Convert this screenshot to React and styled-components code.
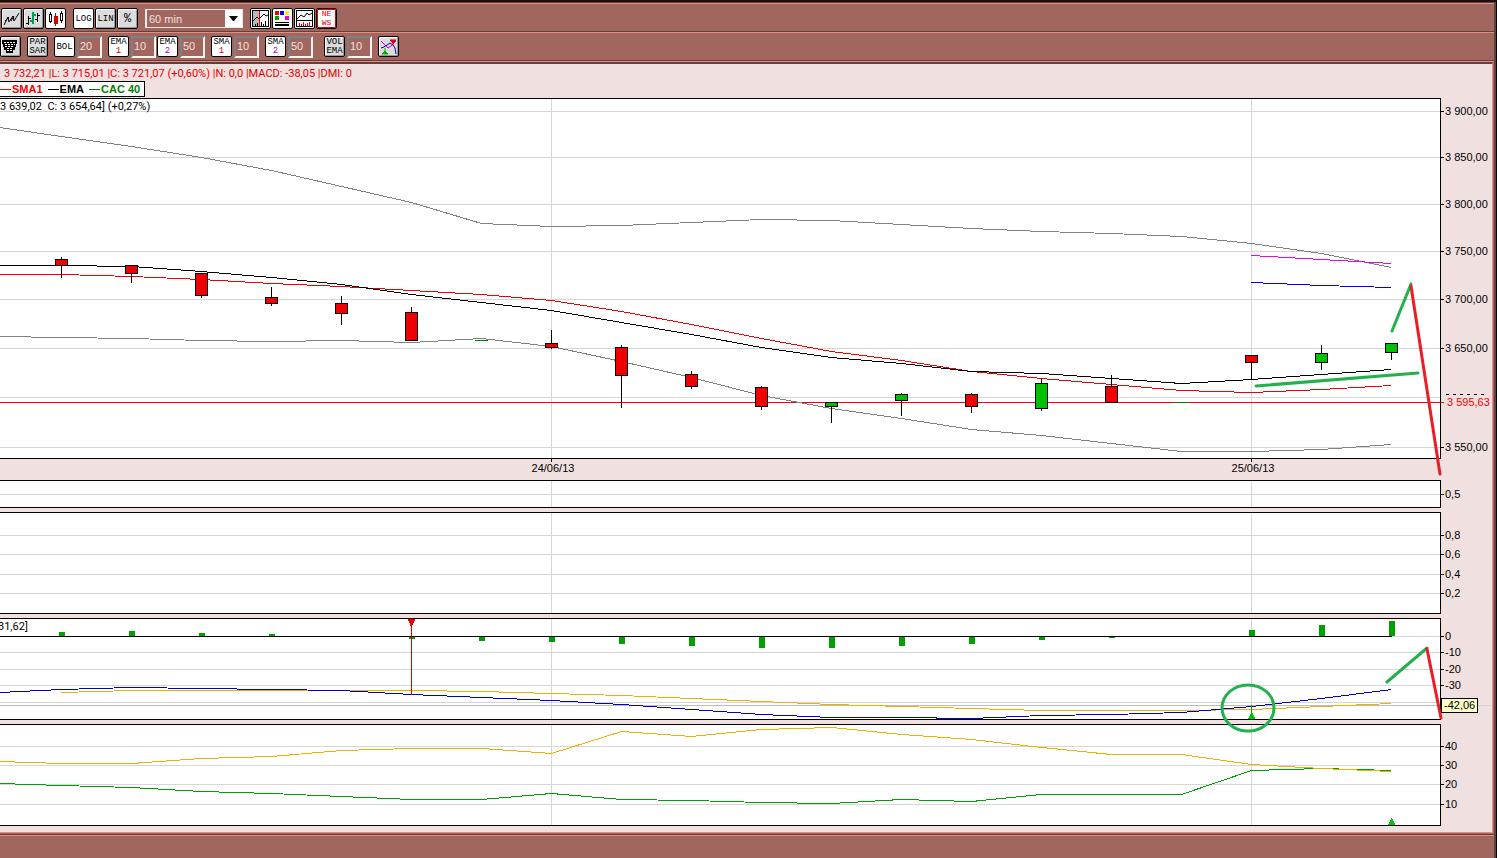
import React from "react"
import styled, {createGlobalStyle} from "styled-components"

const GlobalStyle = createGlobalStyle`
  * {
    box-sizing: border-box;
  }

  body {
    margin: 0;
    font-family: "Liberation Sans", Arial, sans-serif;
    font-size: 11px;
    line-height: 14px;
    background: #a1665e;
  }
`

const fill = "#a1665e"
const light = "#e38e84"
const dark = "#663f3a"
const pink = "#f0e0e0"
const grid = "#d6d6d6"

//  styled components
const Page = styled.div`
  display: flex;
  flex-direction: column;
  min-height: 100vh;
  background: ${fill};
  border-top: 2px solid #1a0d0b;
  border-right: 1px solid black;
  overflow: hidden;
`

const Frame = styled.div`
  border-right: 2px solid ${dark};
  border-top: 1px solid ${dark};
  flex: 1;
`

const Toolbar = styled.div`
  display: flex;
  align-items: center;
  gap: ${({$gap}) => $gap}px;
  height: 29px;
  padding-top: ${({$top}) => $top || 0}px;
  padding-left: ${({$left}) => $left || 0}px;
  border-top: 1px solid ${light};
  border-bottom: 1px solid ${dark};
`

const Divider = styled.div`
  height: 1px;
  background: ${light};
`

const Group = styled.div`
  display: flex;
  align-items: center;
  gap: ${({$gap}) => $gap || 1}px;
  margin-left: ${({$space}) => $space || 0}px;
`

const Button = styled.button`
  display: flex;
  flex-direction: column;
  align-items: center;
  justify-content: center;
  flex: none;
  width: 21px;
  height: 21px;
  padding: 1px 0 0;
  border: 1px solid black;
  border-radius: 2px;
  overflow: hidden;
  background: ${({$on}) => ($on ? "white" : "#dcdcdc")};
  box-shadow: ${({$on}) =>
    $on ? "none" : "inset 1px 1px white, inset -1px -1px #9a9a9a"};
  color: black;
  font-family: "Liberation Mono", monospace;
  font-size: ${({$big}) => ($big ? 12 : 9)}px;
  line-height: 9px;

  svg {
    display: block;
    flex: none;
    width: 19px;
    height: 19px;
    margin-top: -1px;
  }
`

const Index = styled.span`
  color: ${({$color}) => $color};
`

const News = styled.span`
  display: grid;
  width: 19px;
  height: 19px;
  margin-top: -1px;
  border: 1px solid #e00000;
  color: #e00000;
  font-size: 8px;
  line-height: 8px;
  text-align: center;
`

const Period = styled.input`
  width: 25px;
  height: 22px;
  padding: 0 0 2px 1px;
  border: 2px solid;
  border-color: #808080 #f4f4f4 #f4f4f4 #808080;
  border-radius: 0;
  background: ${fill};
  color: #f0e0e0;
  font: 11px "Liberation Sans", Arial, sans-serif;
`

const SelectBox = styled.div`
  position: relative;
  width: 98px;
  height: 19px;
`

const Select = styled.select`
  appearance: none;
  width: 100%;
  height: 100%;
  padding: 0 20px 0 2px;
  border: 1px solid #e8e8e8;
  border-width: 1px 2px;
  border-radius: 0;
  background: ${fill};
  color: #f0e0e0;
  font: 11px "Liberation Sans", Arial, sans-serif;
`

const Arrow = styled.span`
  position: absolute;
  top: 1px;
  right: 1px;
  bottom: 1px;
  width: 17px;
  display: flex;
  align-items: center;
  justify-content: center;
  background: white;
  pointer-events: none;
`

const Content = styled.main`
  margin-right: 1px;
  padding-bottom: 6px;
  background: ${pink};
  border-top: 2px solid ${dark};
  border-right: 1px solid ${light};
  border-bottom: 1px solid ${light};
`

const Quote = styled.p`
  margin: 0;
  padding: 3px 0 0 4px;
  color: #e00000;
  font-family: Roboto, "Liberation Sans", sans-serif;
  white-space: pre;
`

const Legend = styled.div`
  display: flex;
  align-items: center;
  gap: 5px;
  width: 146px;
  height: 16px;
  margin: 0 0 1px -1px;
  border: 1px solid black;
  background: white;
  font-weight: bold;
  white-space: nowrap;
`

const Key = styled.span`
  display: flex;
  align-items: center;
  gap: 1px;
  color: ${({$color}) => $color};

  &::before {
    content: "";
    width: 11px;
    height: 1px;
    background: currentColor;
  }
`

const Charts = styled.div`
  position: relative;
  display: flex;
  flex-direction: column;
  gap: 4px;
`

const Row = styled.div`
  display: flex;
`

const Plot = styled.div`
  position: relative;
  flex: 1;
  min-width: 0;
  height: ${({$height}) => $height}px;
  border: 1px solid black;
  border-left: 0;
  background: white;

  svg {
    display: block;
    width: 100%;
    height: 100%;
  }
`

const Note = styled.span`
  position: absolute;
  top: 1px;
  left: ${({$left}) => $left || 0}px;
  font-family: Roboto, "Liberation Sans", sans-serif;
  white-space: pre;
`

const Axis = styled.svg`
  flex: none;
  width: 51px;
  height: ${({$height}) => $height}px;
  overflow: visible;
  font-size: 11px;
`

const Dates = styled.svg`
  display: block;
  width: calc(100% - 52px);
  height: 17px;
  margin-top: -4px;
  overflow: visible;
  font-size: 11px;
`

const Marks = styled.svg`
  position: absolute;
  top: 0;
  left: 0;
  width: calc(100% - 52px);
  height: 100%;
  overflow: visible;
  pointer-events: none;
`

const PriceTag = styled.output`
  position: absolute;
  right: 14px;
  bottom: 113px;
  width: 37px;
  height: 15px;
  padding: 0 2px;
  border: 1px solid black;
  background: #ffffcc;
  line-height: 13px;
`

const Footer = styled.footer`
  margin-top: 1px;
  border-top: 1px solid ${dark};
  box-shadow: inset 0 1px ${light};
  height: 23px;
`

//  one candle every 70 units, the first at 61
const at = (i) => 61 + i * 70
const days = [551, 1251]

const red = "#f00000"
const green = "#00c000"

//  [body top, body bottom, wick top, wick bottom, colour]
const candles = [
  [259, 265, 257, 277, red],
  [265, 273, 265, 282, red],
  [273, 295, 273, 297, red],
  [297, 303, 287, 305, red],
  [303, 313, 296, 324, red],
  [312, 340, 307, 340, red],
  [340, 340, 340, 340, green],
  [343, 347, 330, 348, red],
  [347, 375, 345, 407, red],
  [374, 386, 371, 388, red],
  [387, 406, 386, 409, red],
  [402, 406, 402, 422, green],
  [394, 400, 393, 415, green],
  [394, 406, 393, 412, red],
  [383, 408, 379, 410, green],
  [386, 402, 375, 402, red],
  [402, 402, 402, 402, green],
  [355, 362, 355, 379, red],
  [353, 362, 345, 369, green],
  [343, 352, 343, 359, green],
]

//  first value stands at the left edge
const bandHigh = [127, 136, 146, 157, 170, 186, 202, 223, 226, 225, 222, 219, 220, 224, 228, 231, 233, 236, 243, 253, 267]
const bandLow = [336, 337, 338, 340, 341, 340, 342, 338, 346, 361, 377, 395, 408, 418, 429, 435, 443, 451, 451, 449, 444]
const ema = [265, 265, 266, 271, 277, 284, 294, 302, 310, 322, 334, 347, 357, 363, 371, 373, 378, 383, 379, 374, 369]
const sma = [274, 274, 276, 279, 283, 286, 290, 294, 300, 311, 324, 338, 351, 360, 371, 378, 384, 390, 392, 389, 385]
const macd = [692, 689, 687, 688, 689, 690, 694, 697, 700, 704, 709, 714, 717, 717, 718, 715, 714, 712, 706, 698, 689]
const signal = [null, 692, 690, 690, 690, 690, 690, 691, 693, 695, 698, 701, 704, 706, 708, 710, 710, 710, 709, 706, 703]
const adx = [761, 763, 763, 758, 756, 750, 748, 748, 753, 731, 736, 729, 727, 734, 739, 747, 754, 754, 764, 768, 771]
const di = [783, 785, 787, 791, 793, 796, 799, 799, 793, 799, 800, 802, 803, 799, 801, 794, 794, 794, 770, 768, 770]

//  signed heights of the bars on the zero line
const bars = [4, 5, 3, 2, 0, -2, -4, -5, -7, -9, -11, -11, -9, -7, -3, -1, 0, 6, 11, 15]

const Line = ({values, color}) => (
  <polyline
    fill="none"
    stroke={color}
    points={values
      .map((y, i) => (y === null ? "" : `${i ? at(i - 1) : -1},${y}`))
      .join(" ")}
  />
)

const Pane = ({top, height, lines, labels = [], note, children, extra}) => (
  <Row>
    <Plot $height={height}>
      <svg
        viewBox={`0 ${top + 1} 1440 ${height - 2}`}
        preserveAspectRatio="none"
        shapeRendering="crispEdges"
      >
        <g transform="translate(0.5 0.5)">
          {lines.map((y) => (
            <path key={y} d={`M-1 ${y}H1440`} stroke={grid} />
          ))}
          {days.map((x) => (
            <path key={x} d={`M${x} ${top}V${top + height}`} stroke={grid} />
          ))}
          {children}
        </g>
      </svg>
      {note}
    </Plot>
    <Axis $height={height} viewBox={`1441 ${top} 51 ${height}`}>
      {lines.map((y, i) =>
        labels[i] ? (
          <g key={y}>
            <path d={`M1441 ${y + 0.5}h3`} stroke="black" />
            <text x="1445" y={y + 4}>
              {labels[i]}
            </text>
          </g>
        ) : null
      )}
      {extra}
    </Axis>
  </Row>
)

const LineIcon = () => (
  <svg viewBox="0 0 19 19" fill="none" stroke="black">
    <path d="M2 16L6 8L7 13L11 7L12 12L17 4M3 12L7 8M9 12L12 7" />
  </svg>
)

const BarsIcon = () => (
  <svg viewBox="0 0 19 19" fill="none" stroke="black" shapeRendering="crispEdges">
    <path d="M4.5 7V16M2 14.5H5M5 9.5H7M13.5 4V13M11 10.5H14M14 6.5H16" />
    <path d="M9 3V15M6 12H9M9 6H12" stroke="#00a050" strokeWidth="2" />
  </svg>
)

const CandlesIcon = () => (
  <svg viewBox="0 0 19 19" fill="white" stroke="black" shapeRendering="crispEdges">
    <path d="M4.5 3V14M15.5 2V14" />
    <rect x="3.5" y="5.5" width="2" height="7" />
    <rect x="14.5" y="4.5" width="2" height="7" />
    <path d="M9.5 4V17" stroke="#c00000" />
    <rect x="8" y="7" width="4" height="8" fill="#d00000" stroke="none" />
  </svg>
)

const SplitIcon = () => (
  <svg viewBox="0 0 19 19" fill="none" stroke="black" shapeRendering="crispEdges">
    <path d="M2 2H8V17H2Z" fill="#b8b8b8" stroke="none" />
    <path d="M1.5 1.5H17.5V17.5H1.5Z" />
    <path d="M2 12L6 8L8 10L13 5L15 7L17 6" shapeRendering="auto" />
    <path d="M4.5 15V17M6.5 14V17M10.5 13V17M12.5 15V17M14.5 12V17" />
    <rect x="8" y="2" width="1" height="15" fill="#f00000" stroke="none" />
  </svg>
)

const PaletteIcon = () => (
  <svg viewBox="0 0 19 19" shapeRendering="crispEdges">
    <path d="M2 2h4v4h-4z" fill="#f00000" />
    <path d="M7 2h4v4h-4z" fill="#0000f0" />
    <path d="M12 2h4v4h-4z" fill="#f8f000" />
    <path d="M2 7h4v4h-4z" fill="#00a000" />
    <path d="M7 7h4v4h-4z" fill="#f8f8f8" />
    <path d="M12 7h4v4h-4z" fill="#f000f0" />
    <path d="M2 13h14v1h-14zM2 15h14v2h-14z" />
  </svg>
)

const VolumeIcon = () => (
  <svg viewBox="0 0 19 19" fill="none" stroke="black" shapeRendering="crispEdges">
    <path d="M1.5 1.5H17.5V17.5H1.5ZM2 11.5H17" />
    <path d="M2 10L6 6L9 8L12 4L14 6L17 4" shapeRendering="auto" />
    <path
      d="M4 14h1v3h-1zM6 15h1v2h-1zM8 13h1v4h-1zM10 15h1v2h-1zM12 14h1v3h-1zM14 13h1v4h-1z"
      fill="#e00000"
      stroke="none"
    />
  </svg>
)

const GlassIcon = () => (
  <svg viewBox="0 0 19 19" shapeRendering="crispEdges">
    <path d="M1 3H16V7H15V10H14V13H12V16H5V13H3V10H2V7H1Z" fill="black" />
    <path
      d="M3 5.5H14M4 7.5H14M4 9.5H13M6 11.5H12M6 13.5H11"
      stroke="white"
      strokeDasharray="2 1"
    />
  </svg>
)

const CrossIcon = () => (
  <svg viewBox="0 0 19 19" fill="none">
    <path d="M2 4L7 9L9 11L12 9L17 4" stroke="#d000d0" />
    <path d="M2 11L5 10L8 8L11 6L14 8L16 11L17 17" stroke="#0000c8" />
    <path d="M11 3H17L14 6ZM14 5V8" fill="#e00000" stroke="#e00000" />
    <path d="M3 17H9L6 14ZM6 14V11" fill="#00b000" stroke="#00b000" />
  </svg>
)

const Indicator = ({name, index, color, value}) => (
  <Group $gap={2}>
    <Button $on type="button">
      {name}
      {index ? <Index $color={color}>{index}</Index> : null}
    </Button>
    <Period aria-label={`${name} ${index || ""} period`} defaultValue={value} />
  </Group>
)

const App = () => {
  return (
    <Page>
      <GlobalStyle />
      <Frame>
        <Toolbar $gap={7} $left={1} $top={2}>
          <Group>
            <Button type="button" aria-label="Line"><LineIcon /></Button>
            <Button type="button" aria-label="Bars"><BarsIcon /></Button>
            <Button $on type="button" aria-label="Candles"><CandlesIcon /></Button>
          </Group>
          <Group>
            <Button $on type="button">LOG</Button>
            <Button type="button">LIN</Button>
            <Button $big type="button">%</Button>
          </Group>
          <SelectBox>
            <Select aria-label="Interval" defaultValue="60 min">
              <option>60 min</option>
            </Select>
            <Arrow>
              <svg width="9" height="5" viewBox="0 0 9 5">
                <path d="M0 0H9L5 5H4Z" />
              </svg>
            </Arrow>
          </SelectBox>
          <Group>
            <Button $on type="button" aria-label="Split"><SplitIcon /></Button>
            <Button $on type="button" aria-label="Colours"><PaletteIcon /></Button>
            <Button $on type="button" aria-label="Volume"><VolumeIcon /></Button>
            <Button $on type="button">
              <News>
                <span>NE</span>
                <span>WS</span>
              </News>
            </Button>
          </Group>
        </Toolbar>
        <Toolbar $gap={6}>
          <Button type="button" aria-label="Filter"><GlassIcon /></Button>
          <Button type="button"><span>PAR</span><span>SAR</span></Button>
          <Indicator name="BOL" value="20" />
          <Group>
            <Indicator name="EMA" index="1" color="#e00000" value="10" />
            <Indicator name="EMA" index="2" color="#b000b0" value="50" />
          </Group>
          <Indicator name="SMA" index="1" color="#e00000" value="10" />
          <Indicator name="SMA" index="2" color="#b000b0" value="50" />
          <Group $gap={2} $space={5}>
            <Button type="button"><span>VOL</span><span>EMA</span></Button>
            <Period aria-label="VOL EMA period" defaultValue="10" />
          </Group>
          <Button type="button" aria-label="Signals"><CrossIcon /></Button>
        </Toolbar>
        <Divider />
        <Content>
          <Quote>3 732,21 |L: 3 715,01 |C: 3 721,07 (+0,60%) |N: 0,0 |MACD: -38,05 |DMI: 0</Quote>
          <Legend>
            <Key $color="#f00000">SMA1</Key>
            <Key $color="black">EMA</Key>
            <Key $color="#008000">CAC 40</Key>
          </Legend>
          <Charts>
            <Pane
              top={98}
              height={361}
              lines={[111, 157, 204, 251, 299, 348, 397, 447]}
              labels={["3 900,00", "3 850,00", "3 800,00", "3 750,00", "3 700,00", "3 650,00", "", "3 550,00"]}
              note={<Note>3 639,02  C: 3 654,64] (+0,27%)</Note>}
              extra={
                <>
                  <path d="M1446 394.5h42" stroke="black" strokeDasharray="3 4" />
                  <path d="M1440 402.5h4" stroke="#ff0000" />
                  <text x="1447" y="406" fill="#f00000">3 595,63</text>
                </>
              }
            >
              <rect x="-1" y="401.5" width="1442" height="1" fill="#ff0000" />
              <Line values={bandHigh} color="#808080" />
              <Line values={bandLow} color="#808080" />
              <Line values={sma} color="#f00000" />
              <Line values={ema} color="black" />
              <path d="M1251 255L1391 263" stroke="#f000f0" />
              <path d="M1251 282L1321 285L1391 287" stroke="#0000f0" fill="none" />
              {candles.map(([open, close, high, low, color], i) =>
                open === close ? (
                  <rect key={i} x={at(i) - 6.5} y={open - 0.5} width="13" height="1" fill="#008000" />
                ) : (
                  <g key={i} stroke="black">
                    <path d={`M${at(i)} ${high - 0.5}V${low + 0.5}`} />
                    <rect x={at(i) - 6} y={open} width="12" height={close - open} fill={color} />
                  </g>
                )
              )}
            </Pane>
            <Dates>
              {["24/06/13", "25/06/13"].map((date, i) => (
                <g key={date}>
                  <rect x={`${days[i] / 14.4}%`} y="0" width="1" height="3" />
                  <text x={`${(days[i] + 2) / 14.4}%`} y="13" textAnchor="middle">
                    {date}
                  </text>
                </g>
              ))}
            </Dates>
            <Pane top={480} height={28} lines={[494]} labels={["0,5"]} />
            <Pane top={512} height={102} lines={[535, 554, 574, 593]} labels={["0,8", "0,6", "0,4", "0,2"]} />
            <Pane
              top={618}
              height={102}
              lines={[636, 652, 669, 685, 702]}
              labels={["0", "-10", "-20", "-30", ""]}
              note={<Note $left={-2}>31,62]</Note>}
              extra={<path d="M1441 705.5h50" stroke={grid} />}
            >
              <path d="M-1 705H1440" stroke="#bcbcbc" />
              {bars.map((v, i) => (
                <rect
                  key={i}
                  x={at(i) - 2.5}
                  y={v > 0 ? 635.5 - v : 636.5}
                  width="6"
                  height={Math.abs(v)}
                  fill="#00a000"
                />
              ))}
              <path d="M-1 636H1391" stroke="black" />
              <Line values={signal} color="#f0b000" />
              <Line values={macd} color="#0000c8" />
              <rect x="410.5" y="618.5" width="1" height="76" fill="#e00000" />
              <path d="M407 618H415L412 625H410Z" fill="#f00000" />
              <path d="M1251 704V713" stroke="#00a000" />
              <path d="M1251 711L1255 719H1247Z" fill="#00c800" />
            </Pane>
            <Pane top={724} height={102} lines={[746, 765, 784, 804]} labels={["40", "30", "20", "10"]}>
              <Line values={di} color="#00a000" />
              <Line values={adx} color="#f0b000" />
              <path d="M1391 817L1395 825H1387Z" fill="#00c800" />
            </Pane>
            <Marks
              viewBox="0 98 1440 728"
              preserveAspectRatio="none"
              fill="none"
              strokeWidth="3"
              strokeLinecap="round"
            >
              <g stroke="#22b14c">
                <path d="M1392 331L1411 284M1256 386L1418 373M1387 682L1427 648" />
                <ellipse cx="1248" cy="708" rx="26" ry="23" />
              </g>
              <path d="M1411 286L1440 474M1427 649L1441 718" stroke="#ed1c24" />
            </Marks>
            <PriceTag>-42,06</PriceTag>
          </Charts>
        </Content>
        <Footer />
      </Frame>
    </Page>
  )
}

export default App
